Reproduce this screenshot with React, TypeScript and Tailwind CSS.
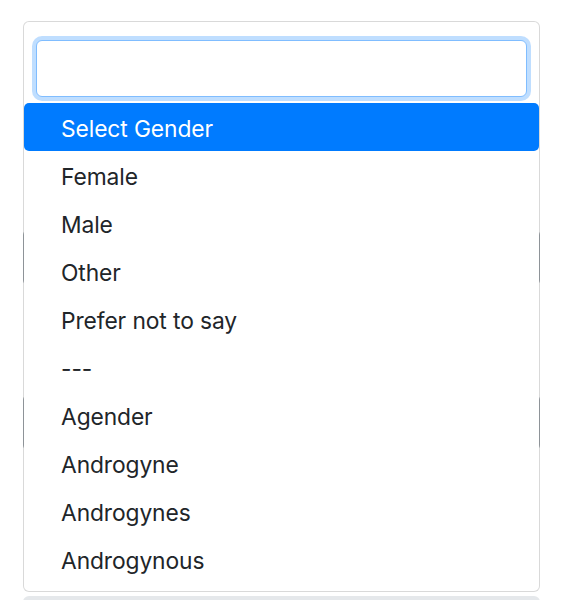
const options = [
  'Select Gender',
  'Female',
  'Male',
  'Other',
  'Prefer not to say',
  '---',
  'Agender',
  'Androgyne',
  'Androgynes',
  'Androgynous',
];

const App = () => {
  return (
    <div
      className="relative h-[600px] w-[563px] overflow-hidden bg-white"
      style={{ fontFamily: 'Inter, "Noto Sans", "Liberation Sans", sans-serif' }}
    >
      {/* form fields underneath the open dropdown */}
      <div className="flex flex-col px-[23px] pt-[229px]">
        <div className="h-[57px] rounded-md border border-[#a7adb3]" />
        <div className="mt-[108px] h-[57px] rounded-md border border-[#a7adb3]" />
        <div className="mt-[145px] h-[40px] rounded-t-md bg-[#e5e8eb]" />
      </div>

      {/* dropdown */}
      <div className="absolute left-[23px] top-[21px] w-[517px] rounded-md border border-black/15 bg-white bg-clip-padding pb-2 pt-[18px]">
        <div className="px-3">
          <input
            type="text"
            className="block h-[57px] w-full rounded-md border border-[#80bdff] bg-white px-3 text-2xl text-[#495057] shadow-[0_0_0_4px_rgba(0,123,255,0.25)] outline-none"
          />
        </div>
        <ul className="mt-[6px]">
          {options.map((opt, i) => (
            <li
              key={opt}
              className={
                i === 0
                  ? 'h-12 rounded-[5px] bg-[#007bff] pl-[37px] pt-[3px] text-[22.8px] leading-[46px] tracking-[-0.1px] text-white'
                  : 'h-12 pl-[37px] pt-[3px] text-[22.8px] leading-[46px] tracking-[-0.1px] text-[#212529]'
              }
            >
              {opt}
            </li>
          ))}
        </ul>
      </div>
    </div>
  );
};

export default App;
